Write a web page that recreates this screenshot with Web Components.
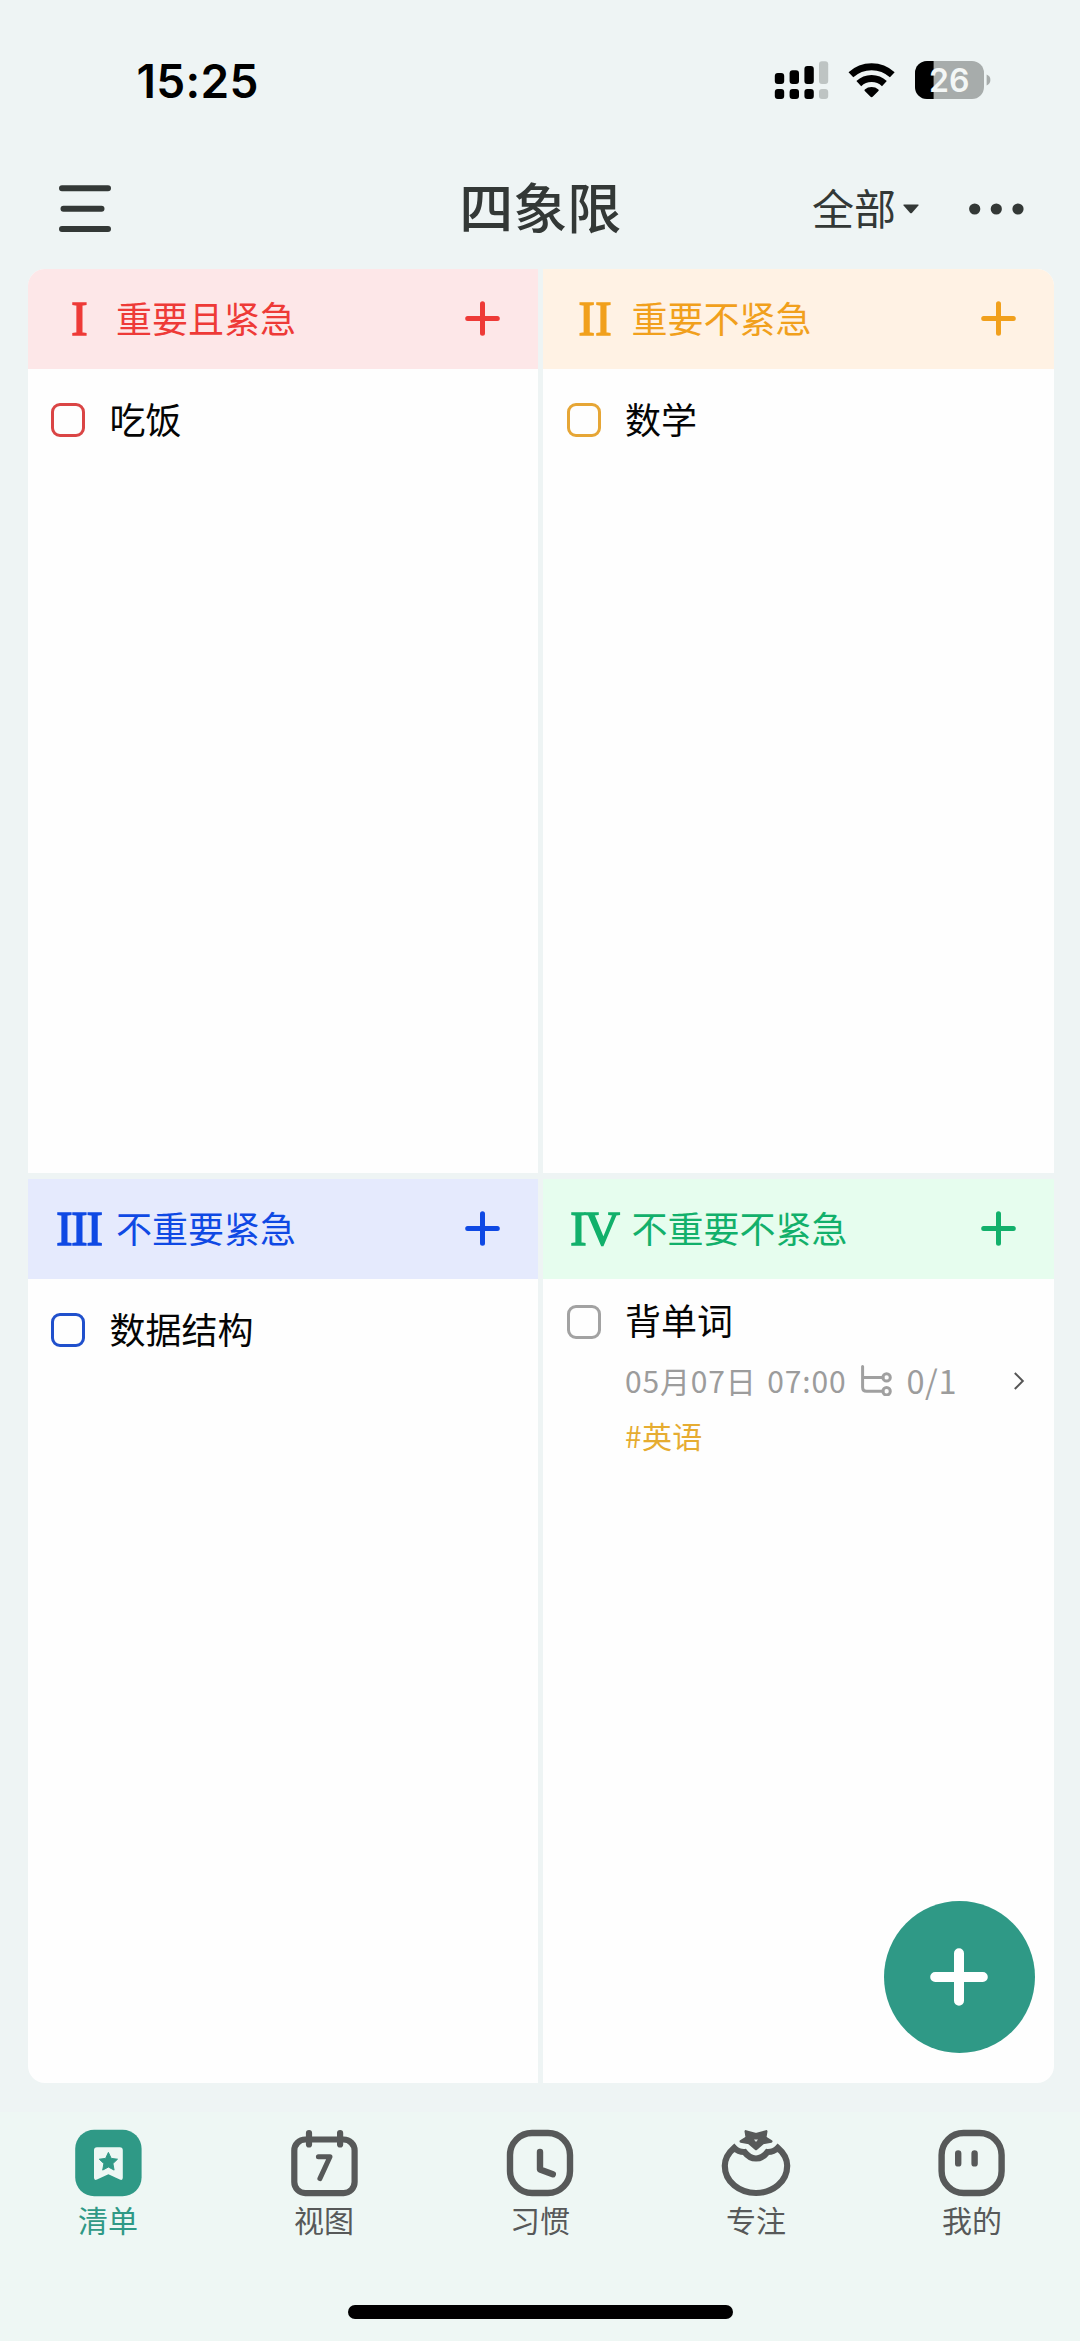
<!DOCTYPE html>
<html lang="zh-CN">
<head>
<meta charset="utf-8">
<title>四象限</title>
<style>
html,body{margin:0;padding:0}
body{width:1080px;height:2341px;overflow:hidden;background:#eef4f4;font-family:"Noto Sans CJK SC","Noto Sans",sans-serif;color:#333836}
</style>
</head>
<body>
<matrix-app></matrix-app>
<script>
const define=(name,html)=>customElements.define(name,class extends HTMLElement{
  connectedCallback(){
    if(this.shadowRoot)return;
    const t=document.createElement('template');
    t.innerHTML=typeof html==='function'?html(this):html;
    this.attachShadow({mode:'open'}).append(t.content.cloneNode(true));
  }
});

define('status-bar',`<style>
:host{display:flex;height:161px;box-sizing:border-box;padding:0 89px 0 136.5px;justify-content:space-between;align-items:flex-start;color:#000}
.time{font:600 46px/56px Inter,sans-serif;margin-top:53px;letter-spacing:.3px}
svg{display:block;margin-top:56px}
</style>
<span class="time">15:25</span>
<svg width="221" height="48" viewBox="770 56 221 48">
<g fill="#000"><rect x="774.8" y="73" width="9.4" height="11" rx="3"/><rect x="789.6" y="70.3" width="9.4" height="13.7" rx="3"/><rect x="804.4" y="66" width="9.4" height="18" rx="3"/>
<rect x="774.8" y="89" width="9.4" height="10" rx="3"/><rect x="789.6" y="89" width="9.4" height="10" rx="3"/><rect x="804.4" y="89" width="9.4" height="10" rx="3"/></g>
<g fill="#bec4c3"><rect x="819" y="61.3" width="9.2" height="22.7" rx="3"/><rect x="819" y="89" width="9.2" height="10" rx="3"/></g>
<g fill="none" stroke="#000" stroke-width="7"><path d="M850.9 74.8a30.5 30.5 0 0 1 41.4 0"/><path d="M858.8 83.6a18.6 18.6 0 0 1 25.6 0"/></g>
<path fill="#000" d="M864.8 89.4a10.8 10.8 0 0 1 13.6 0q.8.8 0 1.6l-5.5 5.6q-1.3 1.2-2.6 0l-5.5-5.6q-.8-.8 0-1.6z"/>
<clipPath id="b"><rect x="915" y="61" width="69" height="38" rx="12"/></clipPath>
<g clip-path="url(#b)"><rect x="915" y="61" width="69" height="38" fill="#a7acab"/><rect x="915" y="61" width="18.6" height="38" fill="#000"/></g>
<path fill="#a7acab" d="M986.6 74.6q3.8 1.5 3.8 5.4t-3.8 5.4z"/>
<text x="949.3" y="91.8" text-anchor="middle" font-family="Inter" font-weight="600" font-size="32" fill="#f4f7f6">26</text>
</svg>`);

define('nav-bar',`<style>
:host{display:grid;grid-template-columns:1fr auto 1fr;height:97px;align-items:center;padding:0 56px 13px 58.5px;color:#333836}
svg{display:block}
h1{margin:0 2px 5px 0;font-size:54px;line-height:60px;font-weight:500}
.right{display:flex;justify-content:flex-end;align-items:center}
.all{font-size:42px;line-height:50px;margin:0 7px 4px 0}
.dots{margin-left:50px}
</style>
<svg width="52" height="47" viewBox="0 0 52 47" stroke="#333836" stroke-width="6" stroke-linecap="round"><path d="M3 3.2h46M4.5 23.7h38M3 44h46"/></svg>
<h1>四象限</h1>
<div class="right"><span class="all">全部</span>
<svg width="16" height="10" viewBox="0 0 16 10"><path d="M1 .5h14q1 .2.4 1L8.9 8.9q-.9.9-1.8 0L.6 1.5Q0 .7 1 .5z" fill="#333836"/></svg>
<svg class="dots" width="55" height="12" viewBox="0 0 55 12" fill="#333836"><circle cx="5.7" cy="6" r="5.6"/><circle cx="27.3" cy="6" r="5.6"/><circle cx="49" cy="6" r="5.6"/></svg></div>`);

define('quadrant-panel',el=>`<style>
:host{display:flex;flex-direction:column;background:#fefefe;overflow:hidden}
header{height:99.5px;flex:none;background:var(--tint);color:var(--accent);display:flex;align-items:center;padding:0 36px 0 22px;box-sizing:border-box}
.num{width:60px;text-align:center;font:400 49px/50px "Liberation Serif",serif;-webkit-text-stroke:1.5px currentColor;margin-right:6.5px;white-space:nowrap;letter-spacing:var(--track,0)}
.num span{margin-right:calc(-1 * var(--track,0px))}
h2{margin:0 0 3px;flex:1;font-size:36px;line-height:40px;font-weight:400}
.list{padding:31px 23px 0 23.5px}
</style>
<header><span class="num"><span>${el.getAttribute('numeral')}</span></span><h2>${el.getAttribute('heading')}</h2>
<svg width="39" height="39" viewBox="-19.5 -19.5 39 39" stroke="currentColor" stroke-width="5" stroke-linecap="round"><path d="M-14.8 0h29.6M0-14.8v29.6"/></svg></header>
<div class="list"><slot></slot></div>`);

define('task-item',`<style>
:host{display:grid;grid-template-columns:34px 1fr;column-gap:24.5px;color:#050505}
.box{width:34px;height:34px;box-sizing:border-box;border:3px solid var(--accent);border-radius:9px;margin-top:3.5px}
.name{font-size:36px;line-height:37px;padding-bottom:3px}
.more{grid-column:2}
</style>
<span class="box"></span><span class="name"><slot></slot></span><div class="more"><slot name="more"></slot></div>`);

define('task-meta',el=>`<style>
:host{display:block;color:#9c9c9c}
.row{display:flex;align-items:center;height:40px;margin-top:19px;padding-right:5.5px;font-size:30px;line-height:40px}
.due{letter-spacing:.85px;word-spacing:3px}
.sub{margin:0 0 0 15px}
.count{margin-left:14px;font-size:32.5px;letter-spacing:.6px;flex:1}
.tag{font-size:30px;line-height:40px;margin-top:14.5px;color:#e6ac31;letter-spacing:.3px}
svg{display:block;margin-top:1.5px}
</style>
<div class="row"><span class="due">${el.getAttribute('due')}</span>
<svg class="sub" width="31" height="31" viewBox="0 0 31 31" fill="none" stroke="#a0a0a0" stroke-width="3" stroke-linecap="round"><path d="M1.6 1.6v20.6q0 4 4 4H22M1.6 12.4H22"/><circle cx="25.6" cy="12.4" r="3.7"/><circle cx="25.6" cy="26.2" r="3.7"/></svg>
<span class="count">${el.getAttribute('count')}</span>
<svg width="12" height="18" viewBox="0 0 12 18" fill="none" stroke="#555" stroke-width="2"><path d="M1.8 1l8 8-8 8"/></svg></div>
<div class="tag">${el.getAttribute('tag')}</div>`);

define('tab-item',`<style>
:host{display:flex;flex-direction:column;align-items:center;flex:1;color:#575959}
:host([active]){color:#2f9986}
span{font-size:30px;line-height:34px;margin-top:3px}
::slotted(svg){display:block}
</style><slot name="icon"></slot><span><slot></slot></span>`);

define('tab-bar',`<style>
:host{display:flex;flex-direction:column;height:229px;background:#eef7f4}
nav{display:flex;padding-top:14.5px}
.home{width:385px;height:14px;border-radius:7px;background:#000;margin:auto auto 22px 348px}
</style>
<nav>
<tab-item active><svg slot="icon" width="72" height="72" viewBox="-36.4 -36 72 72"><rect x="-33.2" y="-33.2" width="66.4" height="66.4" rx="19" fill="#2f9986"/><path d="M-11.4-15.8h22.8q3 0 3 3v27.6q0 3-3 1.8L0 11.2l-11.4 5.4q-3 1.2-3-1.8v-27.6q0-3 3-3z" fill="#eef7f4"/><path d="M0-10.6l2.8 6 6.3.8-4.6 4.4 1.2 6.5L0 4l-5.7 3.1 1.2-6.5-4.6-4.4 6.3-.8z" fill="#2f9986" stroke="#2f9986" stroke-width="1" stroke-linejoin="round"/></svg>清单</tab-item>
<tab-item><svg slot="icon" width="72" height="72" viewBox="-36.4 -36 72 72" fill="none" stroke="#575959" stroke-width="6.2" stroke-linecap="round" stroke-linejoin="round"><rect x="-30.1" y="-23.5" width="60.3" height="53.6" rx="11"/><path d="M-15.4-30v11.5M15.7-30v11.5"/><path stroke-width="5" d="M-6-6.3H5.6L-4.5 15.6"/></svg>视图</tab-item>
<tab-item><svg slot="icon" width="72" height="72" viewBox="-36 -36 72 72" fill="none" stroke="#575959" stroke-width="6.4" stroke-linecap="round" stroke-linejoin="round"><rect x="-30" y="-30" width="60" height="60" rx="22"/><path d="M0-11V6.5L12.8 11.3"/></svg>习惯</tab-item>
<tab-item><svg slot="icon" width="72" height="72" viewBox="-36 -36 72 72" fill="none" stroke="#575959"><path stroke-width="6.2" stroke-linejoin="miter" d="M-21.8-15.2C-28.5-9.5-31.2-3.5-31.2 2.8C-31.2 19-16.5 30 0 30S31.2 19 31.2 2.8C31.2-3.5 28.5-9.5 21.8-15.2Q17.5-10.8 11.5-11Q6.5-4.5 0-4.5T-11.5-11Q-17.5-10.8-21.8-15.2z"/><path fill="#575959" stroke-width="2.6" stroke-linejoin="round" d="M0-28.8L10.2-31.6L9.2-25.4L15.2-21.6L7-20L0-14L-7-20L-15.2-21.6L-9.2-25.4L-10.2-31.6z"/><path fill="#dfe7e5" stroke="none" d="M-2-23.6h4L0-21z"/></svg>专注</tab-item>
<tab-item><svg slot="icon" width="72" height="72" viewBox="-35.6 -36 72 72" fill="none" stroke="#575959" stroke-width="6.4" stroke-linecap="round"><rect x="-30" y="-30" width="60" height="60" rx="22"/><path d="M-13.4-9.6v10M3-9.6v10"/></svg>我的</tab-item>
</nav>
<div class="home"></div>`);

define('add-button',`<style>
:host{display:flex;width:151px;height:152px;border-radius:50%;background:#2f9986;align-items:center;justify-content:center}
</style>
<svg width="60" height="60" viewBox="-30 -30 60 60" stroke="#fff" stroke-width="10" stroke-linecap="round"><path d="M-23.8 0h47.6M0-23.8v47.6"/></svg>`);

define('matrix-app',`<style>
:host{display:flex;flex-direction:column;width:1080px;height:2341px;position:relative;background:#eef4f4}
nav-bar{flex:none;box-sizing:border-box;height:108px}
main{display:grid;grid-template:904px 904px/510px 510.5px;gap:6px 5.5px;margin:0 26.5px 0 27.5px;border-radius:17px;overflow:hidden;height:1814px}
tab-bar{margin-top:auto}
add-button{position:absolute;left:883.5px;top:1901px}
.q1{--accent:#ee3a37;--tint:#fde7e8}
.q2{--accent:#f1a01c;--tint:#fff2e4;--track:.6px}
.q3{--accent:#0f49e4;--tint:#e5eafd;--track:-1.2px}
.q4{--accent:#12b06b;--tint:#e6fdee;--track:-2px}
.q1 task-item{--accent:#da4545}.q2 task-item{--accent:#e6a636}.q3 task-item{--accent:#2050cc}
.q4 task-item{--accent:#a2a2a2;margin-top:-8.5px}
</style>
<status-bar></status-bar>
<nav-bar></nav-bar>
<main>
<quadrant-panel class="q1" numeral="I" heading="重要且紧急"><task-item>吃饭</task-item></quadrant-panel>
<quadrant-panel class="q2" numeral="II" heading="重要不紧急"><task-item>数学</task-item></quadrant-panel>
<quadrant-panel class="q3" numeral="III" heading="不重要紧急"><task-item>数据结构</task-item></quadrant-panel>
<quadrant-panel class="q4" numeral="IV" heading="不重要不紧急"><task-item>背单词<task-meta slot="more" due="05月07日 07:00" count="0/1" tag="#英语"></task-meta></task-item></quadrant-panel>
</main>
<tab-bar></tab-bar>
<add-button></add-button>`);
</script>
</body>
</html>
